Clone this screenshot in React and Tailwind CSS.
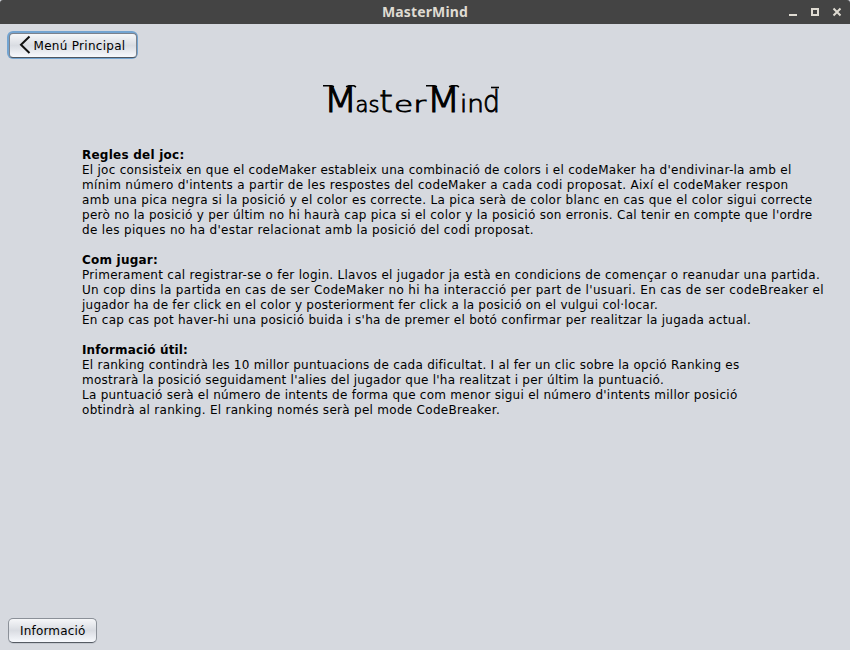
import { useLayoutEffect, useRef, useState } from 'react';

const sections = [
  {
    title: ['Regles del joc:', 102.5],
    lines: [
      ["El joc consisteix en que el codeMaker estableix una combinació de colors i el codeMaker ha d'endivinar-la amb el", 709.5],
      ["mínim número d'intents a partir de les respostes del codeMaker a cada codi proposat. Així el codeMaker respon", 706.5],
      ['amb una pica negra si la posició y el color es correcte. La pica serà de color blanc en cas que el color sigui correcte', 730.5],
      ["però no la posició y per últim no hi haurà cap pica si el color y la posició son erronis. Cal tenir en compte que l'ordre", 730.5],
      ["de les piques no ha d'estar relacionat amb la posició del codi proposat.", 452],
    ],
  },
  {
    title: ['Com jugar:', 76],
    lines: [
      ['Primerament cal registrar-se o fer login. Llavos el jugador ja està en condicions de començar o reanudar una partida.', 738],
      ["Un cop dins la partida en cas de ser CodeMaker no hi ha interacció per part de l'usuari. En cas de ser codeBreaker el", 742],
      ['jugador ha de fer click en el color y posteriorment fer click a la posició on el vulgui col·locar.', 576],
      ["En cap cas pot haver-hi una posició buida i s'ha de premer el botó confirmar per realitzar la jugada actual.", 669],
    ],
  },
  {
    title: ['Informació útil:', 106],
    lines: [
      ['El ranking contindrà les 10 millor puntuacions de cada dificultat. I al fer un clic sobre la opció Ranking es', 657.5],
      ["mostrarà la posició seguidament l'alies del jugador que l'ha realitzat i per últim la puntuació.", 582],
      ["La puntuació serà el número de intents de forma que com menor sigui el número d'intents millor posició", 655.5],
      ['obtindrà al ranking. El ranking només serà pel mode CodeBreaker.', 418],
    ],
  },
];

// Spreads a single line of text over the given width with letter spacing.
function Fit({ text, width }) {
  const ref = useRef(null);
  const [spacing, setSpacing] = useState(0);
  useLayoutEffect(() => {
    const natural = ref.current.getBoundingClientRect().width - spacing * text.length;
    setSpacing((width - natural) / text.length);
  }, [text, width]);
  return (
    <span ref={ref} className="inline-block whitespace-nowrap" style={{ letterSpacing: `${spacing}px` }}>
      {text}
    </span>
  );
}

// Lettering of the logo: each run has its own size, start and stretched width.
const logoRuns = [
  ['M', 323.5, 34, 'text-[35px]', 1.1],
  ['as', 355.5, 24, 'text-[21px]', 0.8],
  ['t', 379, 14, 'text-[31px]', 0.8],
  ['er', 394, 32, 'text-[21px]', 0.8],
  ['M', 426.5, 34, 'text-[35px]', 1.1],
  ['in', 460, 24, 'text-[23px]', 0.8],
  ['d', 483, 17, 'text-[31px]', 0.9],
];

function Logo() {
  return (
    <svg className="ml-[322px] block h-[34px] w-[182px] overflow-visible font-['DejaVu_Sans']" viewBox="322 82 182 34" stroke="#000">
      {logoRuns.map(([text, x, width, size, weight]) => (
        <text key={x} x={x} y="112" textLength={width} lengthAdjust="spacingAndGlyphs" strokeWidth={weight} className={`${size} font-extralight`}>
          {text}
        </text>
      ))}
      <g fill="none" strokeWidth="1.6">
        <path d="M323 85.8h8l3 1M346 86.8l3-1h5l2 1.2" />
        <path d="M426 85.8h8l3 1M449 86.8l3-1h5l2 1.2" />
        <path d="M491 87.500h8" />
      </g>
    </svg>
  );
}

export default function App() {
  return (
    <div className="flex h-[650px] w-[850px] flex-col overflow-hidden bg-[#d6d9df] font-['DejaVu_Sans',sans-serif] text-[12px] leading-[15px] text-black">
      <header className="grid h-6 shrink-0 grid-cols-[1fr_auto_1fr] items-center rounded-t-[3px] bg-[#444444]">
        <span />
        <span className="font-['Noto_Sans',sans-serif] text-[14px] font-bold leading-6 text-[#dfdbd2]">
          <Fit text="MasterMind" width={86} />
        </span>
        <svg className="ml-auto block h-6 w-[66px]" viewBox="784 0 66 24" fill="none" stroke="#dfdbd2" strokeWidth="2">
          <path d="M789 15h8" />
          <path d="M812 9h6v6h-6z" />
          <path d="M833.5 8.5l7 7M840.5 8.5l-7 7" />
        </svg>
      </header>

      <div className="pl-[7px] pt-[7px]">
        <button className="flex h-7 w-[131px] items-center justify-center rounded-[6px] bg-[#73a4d1]">
          <span className="flex h-[25px] w-[128px] items-center rounded-[4px] border border-[#7c828c] border-b-[#4f565f] bg-linear-to-b from-[#f6f7f9] via-[#d9dce2] to-[#f7f9fd] pl-[9px]">
            <svg className="h-[20px] w-[13px] shrink-0" viewBox="0 0 13 20" fill="none" stroke="#111" strokeWidth="2">
              <path d="M10.5 1.5L2 9.8L10.5 18" />
            </svg>
            <span className="pl-[2px] pt-[2px]"><Fit text="Menú Principal" width={92} /></span>
          </span>
        </button>
      </div>

      <h1 className="pt-[23px]"><Logo /></h1>

      <main className="flex flex-col gap-[15px] pl-[82px] pt-[32px]">
        {sections.map(({ title, lines }) => (
          <section key={title[0]}>
            <h2 className="flex h-[15px] font-bold"><Fit text={title[0]} width={title[1]} /></h2>
            {lines.map(([text, width]) => (
              <p key={text} className="flex h-[15px]"><Fit text={text} width={width} /></p>
            ))}
          </section>
        ))}
      </main>

      <footer className="mt-auto pb-[7px] pl-2">
        <button className="flex h-[25px] w-[89px] items-center rounded-[5px] border border-[#8b9098] border-b-[#555b63] bg-linear-to-b from-[#f6f7f9] via-[#d9dce2] to-[#f7f9fd] pl-[11px] pt-px shadow-[0_1px_0_#c3c7ce]">
          <Fit text="Informació" width={65.5} />
        </button>
      </footer>
    </div>
  );
}
